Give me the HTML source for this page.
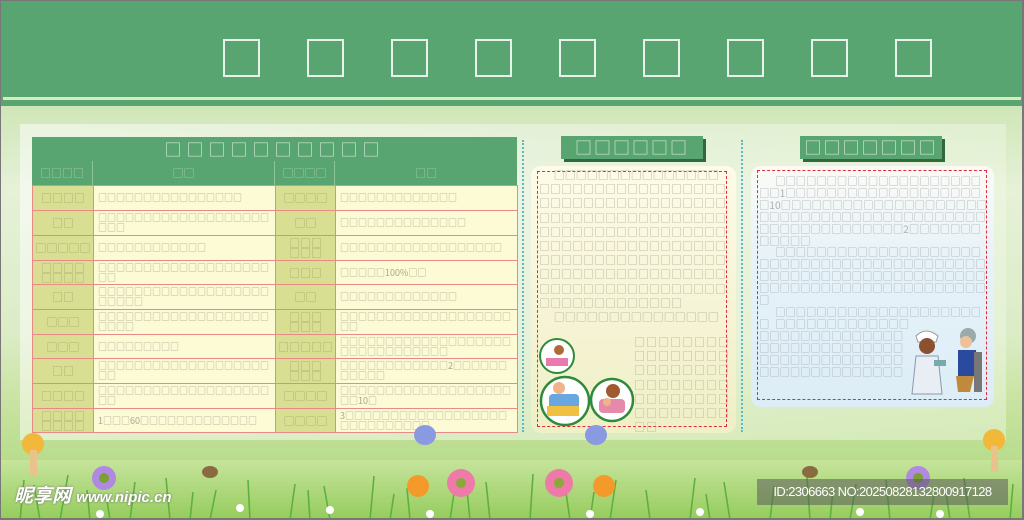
<!DOCTYPE html>
<html><head><meta charset="utf-8"><style>
*{margin:0;padding:0;box-sizing:border-box}
body{width:1024px;height:520px;overflow:hidden;position:relative;background:#dff0c8;font-family:"Liberation Sans","Noto Sans CJK SC",sans-serif}
.a{position:absolute}
.hdr{left:0;top:0;width:1024px;height:106px;background:#58a571}
.sq{top:39px;width:37px;height:38px;border:2px solid #e8f3ea}
.cj{font-family:"Noto Sans CJK SC",sans-serif}
table{border-collapse:collapse;table-layout:fixed}
td{border:1px solid #e98a86;font-family:"Noto Sans CJK SC",sans-serif;color:#a6a690;overflow:hidden;line-height:10px;word-break:break-all;overflow-wrap:anywhere}
td.l{background:#d8df92;text-align:center;font-size:11px;color:#a7ab6c}
td.t{background:#fdfbd6;font-size:9px;padding:0 4px}
.txt{font-family:"Noto Sans CJK SC",sans-serif;color:#b0b0a0;word-break:break-all;overflow-wrap:anywhere;overflow:hidden}
</style></head><body>
<div class="a" style="left:0;top:106px;width:1024px;height:414px;background:linear-gradient(180deg,#cfe6b6 0%,#e6f1d8 20%,#dcecc6 55%,#c8e3a0 72%,#a8d678 100%)"></div>
<div class="a" style="left:20px;top:124px;width:986px;height:316px;background:linear-gradient(90deg,rgba(255,255,255,.5),rgba(240,247,235,.55) 50%,rgba(240,248,230,.45));"></div>
<div class="a hdr"></div>
<div class="a" style="left:3px;top:97px;width:1018px;height:3px;background:#d9ecbd"></div>
<div class="a sq" style="left:223px"></div><div class="a sq" style="left:307px"></div><div class="a sq" style="left:391px"></div><div class="a sq" style="left:475px"></div><div class="a sq" style="left:559px"></div><div class="a sq" style="left:643px"></div><div class="a sq" style="left:727px"></div><div class="a sq" style="left:811px"></div><div class="a sq" style="left:895px"></div>

<!-- table -->
<div class="a cj" style="left:32px;top:137px;width:485px;height:24px;background:#58a571;color:#cfe6d4;font-size:17px;text-align:center;line-height:23px;letter-spacing:5px">□□□□□□□□□□</div>
<div class="a" style="left:32px;top:161px;width:485px;height:24px;background:#58a571"></div>
<div class="a cj" style="left:32px;top:161px;width:61px;height:24px;color:#a9cfb0;font-size:11px;text-align:center;line-height:24px;border-right:1px solid #8cc59a">□□□□</div>
<div class="a cj" style="left:93px;top:161px;width:182px;height:24px;color:#a9cfb0;font-size:11px;text-align:center;line-height:24px;border-right:1px solid #8cc59a">□□</div>
<div class="a cj" style="left:275px;top:161px;width:60px;height:24px;color:#a9cfb0;font-size:11px;text-align:center;line-height:24px;border-right:1px solid #8cc59a">□□□□</div>
<div class="a cj" style="left:335px;top:161px;width:182px;height:24px;color:#a9cfb0;font-size:11px;text-align:center;line-height:24px">□□</div>
<table class="a" style="left:32px;top:185px;width:485px;height:247px">
<colgroup><col style="width:61px"><col style="width:182px"><col style="width:60px"><col style="width:182px"></colgroup>
<tr style="height:25px"><td class="l">□□□□</td><td class="t">□□□□□□□□□□□□□□□□</td><td class="l">□□□□</td><td class="t">□□□□□□□□□□□□□</td></tr>
<tr style="height:25px"><td class="l">□□</td><td class="t">□□□□□□□□□□□□□□□□□□□□□□</td><td class="l">□□</td><td class="t">□□□□□□□□□□□□□□</td></tr>
<tr style="height:25px"><td class="l">□□□□□</td><td class="t">□□□□□□□□□□□□</td><td class="l">□□□<br>□□□</td><td class="t" style="white-space:nowrap">□□□□□□□□□□□□□□□□□□</td></tr>
<tr style="height:24px"><td class="l">□□□□<br>□□□□</td><td class="t">□□□□□□□□□□□□□□□□□□□□□</td><td class="l">□□□</td><td class="t">□□□□□100%□□</td></tr>
<tr style="height:25px"><td class="l">□□</td><td class="t">□□□□□□□□□□□□□□□□□□□□□□□□</td><td class="l">□□</td><td class="t">□□□□□□□□□□□□□</td></tr>
<tr style="height:25px"><td class="l">□□□</td><td class="t">□□□□□□□□□□□□□□□□□□□□□□□</td><td class="l">□□□<br>□□□</td><td class="t">□□□□□□□□□□□□□□□□□□□□□</td></tr>
<tr style="height:24px"><td class="l">□□□</td><td class="t">□□□□□□□□□</td><td class="l">□□□□□</td><td class="t">□□□□□□□□□□□□□□□□□□□□□□□□□□□□□□□</td></tr>
<tr style="height:25px"><td class="l">□□</td><td class="t">□□□□□□□□□□□□□□□□□□□□□</td><td class="l">□□□<br>□□□</td><td class="t">□□□□□□□□□□□□2□□□□□□□□□□□</td></tr>
<tr style="height:25px"><td class="l">□□□□</td><td class="t">□□□□□□□□□□□□□□□□□□□□□</td><td class="l">□□□□</td><td class="t">□□□□□□□□□□□□□□□□□□□□□10□</td></tr>
<tr style="height:24px"><td class="l">□□□□<br>□□□□</td><td class="t">1□□□60□□□□□□□□□□□□□</td><td class="l">□□□□</td><td class="t">3□□□□□□□□□□□□□□□□□□□□□□□□□□□□</td></tr>
</table>

<!-- dotted lines -->
<div class="a" style="left:522px;top:140px;width:0;height:292px;border-left:2px dotted #5fb8c8"></div>
<div class="a" style="left:741px;top:140px;width:0;height:292px;border-left:2px dotted #5fb8c8"></div>

<!-- middle -->
<div class="a" style="left:564px;top:139px;width:142px;height:23px;background:#2f6a3c"></div>
<div class="a cj" style="left:561px;top:136px;width:142px;height:23px;background:#58a571;color:#cfe6d4;font-size:17px;line-height:22px;text-align:center;letter-spacing:2px">□□□□□□</div>
<div class="a" style="left:531px;top:166px;width:205px;height:267px;border-radius:10px;background:linear-gradient(180deg,#fefbe8,#f4f2d0 70%,#eef0c6)"></div>
<div class="a" style="left:537px;top:171px;width:190px;height:256px;border:1px dashed #e42b3c"></div>
<div class="a txt" style="left:539px;top:168px;width:190px;font-size:11px;line-height:14.2px">&nbsp;&nbsp;&nbsp;&nbsp;&nbsp;&nbsp;□□□□□□□□□□□□□□□□□□□□□□□□□□□□□□□□□□□□□□□□□□□□□□□□□□□□□□□□□□□□□□□□□□□□□□□□□□□□□□□□□□□□□□□□□□□□□□□□□□□□□□□□□□□□□□□□□□□□□□□□□□□□□□□□□□□□□□□□□□□□□□□□□□□□□□□□□□□□□□□□□□□□<br>&nbsp;&nbsp;&nbsp;&nbsp;&nbsp;&nbsp;□□□□□□□□□□□□□□□</div>
<div class="a txt" style="left:634px;top:335px;width:96px;font-size:11px;line-height:14.2px;letter-spacing:1px">□□□□□□□□□□□□□□□□□□□□□□□□□□□□□□□□□□□□□□□□□□□□□□□□□□</div>
<svg class="a" style="left:537px;top:336px" width="100" height="96">
<circle cx="20" cy="20" r="17" fill="#fff" stroke="#2e8b3a" stroke-width="2"/>
<rect x="9" y="22" width="22" height="8" fill="#e87ab0"/><circle cx="22" cy="14" r="5" fill="#b06a3a"/>
<circle cx="28" cy="65" r="24" fill="#fff" stroke="#2e8b3a" stroke-width="2.5"/>
<rect x="12" y="58" width="30" height="20" rx="4" fill="#6aa6e0"/><circle cx="22" cy="52" r="6" fill="#f2b28a"/><rect x="10" y="70" width="32" height="10" fill="#f0c040"/>
<circle cx="75" cy="64" r="21" fill="#fff" stroke="#2e8b3a" stroke-width="2.5"/>
<circle cx="76" cy="55" r="7" fill="#a05a30"/><rect x="62" y="63" width="26" height="14" rx="4" fill="#e58aa8"/><circle cx="70" cy="66" r="4" fill="#f2b28a"/>
</svg>

<!-- right -->
<div class="a" style="left:803px;top:139px;width:142px;height:23px;background:#2f6a3c"></div>
<div class="a cj" style="left:800px;top:136px;width:142px;height:23px;background:#58a571;color:#cfe6d4;font-size:17px;line-height:22px;text-align:center;letter-spacing:2px;overflow:hidden;white-space:nowrap">□□□□□□□</div>
<div class="a" style="left:751px;top:166px;width:243px;height:241px;border-radius:10px;background:linear-gradient(180deg,#fbfbf6,#e6f2f8 40%,#dcedf7)"></div>
<div class="a" style="left:757px;top:170px;width:230px;height:230px;border:1px dashed #e42b3c"></div>
<div class="a txt" style="left:759px;top:175px;width:230px;font-size:10.3px;line-height:11.9px;color:#aab0b6">&nbsp;&nbsp;&nbsp;&nbsp;&nbsp;&nbsp;&nbsp;□□□□□□□□□□□□□□□□□□□□□□1□□□□□□□□□□□□□□□□□□□□10□□□□□□□□□□□□□□□□□□□□□□□□□□□□□□□□□□□□□□□□□□□□□□□□□□□□□□□□2□□□□□□□□□□□□<br>&nbsp;&nbsp;&nbsp;&nbsp;&nbsp;&nbsp;&nbsp;□□□□□□□□□□□□□□□□□□□□□□□□□□□□□□□□□□□□□□□□□□□□□□□□□□□□□□□□□□□□□□□□□□□□□□□□□□□□□□□□□□□□□□□<br>&nbsp;&nbsp;&nbsp;&nbsp;&nbsp;&nbsp;&nbsp;□□□□□□□□□□□□□□□□□□□□□</div>
<div class="a txt" style="left:759px;top:318px;width:150px;font-size:10.3px;line-height:11.9px;color:#aab0b6">&nbsp;&nbsp;&nbsp;&nbsp;&nbsp;&nbsp;&nbsp;□□□□□□□□□□□□□□□□□□□□□□□□□□□□□□□□□□□□□□□□□□□□□□□□□□□□□□□□□□□□□□□□□□□□□</div>
<svg class="a" style="left:908px;top:322px" width="80" height="80">
<path d="M8 14 q10 -10 22 0 l-2 6 h-18z" fill="#fff" stroke="#999"/><circle cx="19" cy="24" r="8" fill="#8a5030"/>
<path d="M8 34 h22 l4 38 h-30z" fill="#e8eef4" stroke="#8899aa"/><rect x="26" y="38" width="12" height="6" fill="#7aa"/>
<circle cx="60" cy="14" r="8" fill="#9aa"/><circle cx="58" cy="20" r="6" fill="#f0c09a"/>
<path d="M50 28 h18 l2 26 h-20z" fill="#2a4aa0"/><path d="M48 54 h18 l-4 16 h-12z" fill="#c08a3a"/><rect x="66" y="30" width="8" height="40" fill="#777"/>
</svg>

<!-- decor bottom -->
<svg class="a" style="left:0;top:420px" width="1024" height="100">
<defs><linearGradient id="g" x1="0" y1="0" x2="0" y2="1"><stop offset="0" stop-color="#c6e49c"/><stop offset="1" stop-color="#95cc5c"/></linearGradient></defs>
<rect x="0" y="40" width="1024" height="60" fill="url(#g)"/>
<g stroke="#5fb040" stroke-width="1.6" fill="none">
<path d="M20 100 l4-40 M40 100 l-6-35 M60 100 l8-45 M90 100 l-3-30 M130 100 l5-38 M170 100 l-4-42 M210 100 l6-30 M250 100 l-2-40 M290 100 l5-36 M330 100 l-6-34 M370 100 l4-44 M410 100 l-3-32 M450 100 l6-40 M490 100 l-4-38 M530 100 l3-46 M570 100 l-5-34 M610 100 l6-40 M650 100 l-4-30 M690 100 l5-42 M730 100 l-6-38 M770 100 l4-34 M810 100 l-3-44 M850 100 l6-36 M890 100 l-4-40 M930 100 l5-32 M970 100 l-6-42 M1010 100 l3-36 M110 100 l-4-26 M190 100 l3-28 M310 100 l-2-30 M390 100 l4-26 M470 100 l-3-30 M590 100 l4-28 M710 100 l-4-26 M830 100 l3-30 M950 100 l-4-28"/>
</g>
<g fill="#fff"><circle cx="100" cy="94" r="4"/><circle cx="240" cy="88" r="4"/><circle cx="330" cy="90" r="4"/><circle cx="430" cy="94" r="4"/><circle cx="590" cy="94" r="4"/><circle cx="700" cy="92" r="4"/><circle cx="860" cy="92" r="4"/><circle cx="940" cy="94" r="4"/></g>
<g><circle cx="33" cy="24" r="11" fill="#f1b83a"/><rect x="30" y="30" width="7" height="26" fill="#e9c38a"/>
<circle cx="994" cy="20" r="11" fill="#f1b83a"/><rect x="991" y="26" width="7" height="26" fill="#e9c38a"/>
<circle cx="104" cy="58" r="12" fill="#b08ae0"/><circle cx="104" cy="58" r="5" fill="#7aa030"/>
<circle cx="918" cy="58" r="12" fill="#b08ae0"/><circle cx="918" cy="58" r="5" fill="#7aa030"/>
<circle cx="418" cy="66" r="11" fill="#f39a2a"/><circle cx="461" cy="63" r="14" fill="#ee7aa8"/><circle cx="461" cy="63" r="5" fill="#8ca83a"/>
<circle cx="559" cy="63" r="14" fill="#ee7aa8"/><circle cx="559" cy="63" r="5" fill="#8ca83a"/><circle cx="604" cy="66" r="11" fill="#f39a2a"/>
<ellipse cx="425" cy="15" rx="11" ry="10" fill="#8a9ae0"/><ellipse cx="596" cy="15" rx="11" ry="10" fill="#8a9ae0"/>
<ellipse cx="210" cy="52" rx="8" ry="6" fill="#8a6a40"/><ellipse cx="810" cy="52" rx="8" ry="6" fill="#8a6a40"/></g>
</svg>
<div class="a" style="left:14px;top:481px;color:#fff;font-size:19px;font-weight:bold;font-style:italic;font-family:'Liberation Sans','Noto Sans CJK SC',sans-serif;white-space:nowrap;text-shadow:0 0 2px #666">昵享网 <span style="font-size:15px">www.nipic.cn</span></div>
<div class="a" style="left:757px;top:479px;width:251px;height:26px;background:rgba(90,90,90,.55);color:#fff;font-size:13px;line-height:26px;text-align:center;white-space:nowrap;letter-spacing:-0.6px">ID:2306663 NO:20250828132800917128</div>
<div class="a" style="left:0;top:0;width:1024px;height:520px;border:1px solid #777;border-right-width:2px;border-bottom-width:2px"></div>
</body></html>
